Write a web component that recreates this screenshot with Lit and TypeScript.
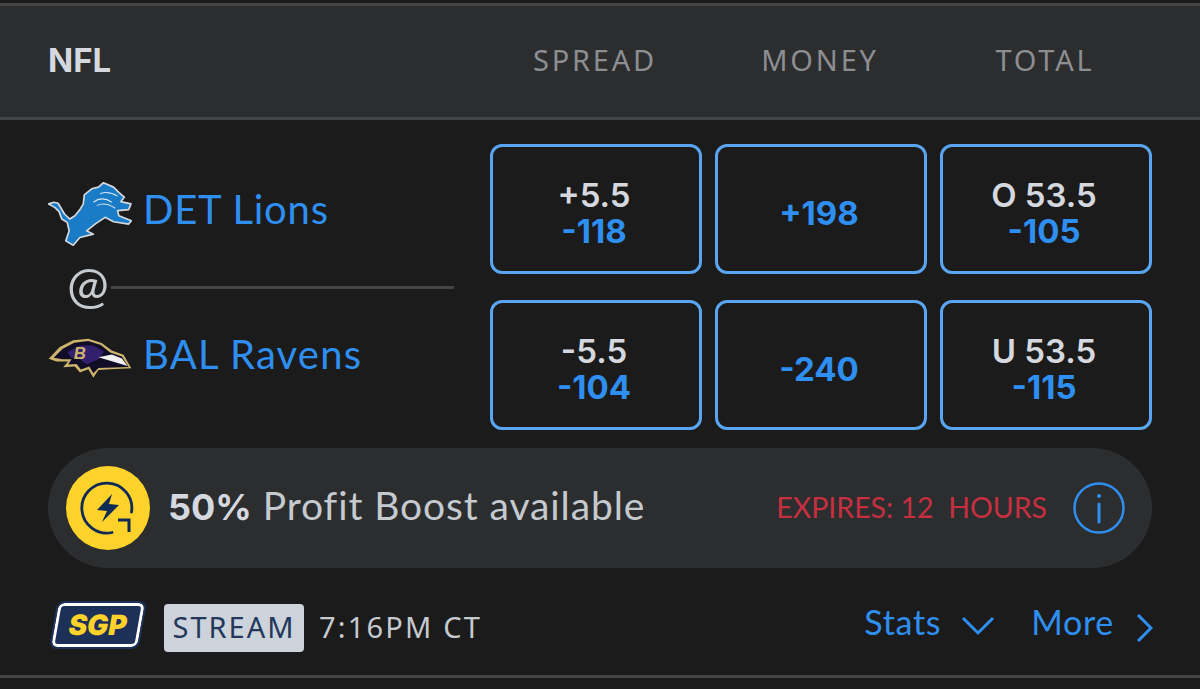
import { LitElement, html, css } from "lit";
import { customElement } from "lit/decorators.js";

const lion = html`<svg class="logo" width="84" height="64" viewBox="55 40 250 190">
  <path d="M57 105 L72 100 L85 103 L94 118 L104 135 L120 150 L135 140 L150 122 L160 105 L163 78 L185 60 L205 55 L220 42 L250 55 L265 70 L282 85 L272 98 L302 105 L295 122 L262 125 L266 140 L303 155 L295 165 L250 158 L225 145 L195 165 L170 185 L190 195 L150 205 L130 228 L108 215 L118 185 L112 160 L96 150 L88 128 L76 116 Z" fill="#1a7cc6" stroke="#d5d8dc" stroke-width="5" stroke-linejoin="round"/>
  <path d="M190 100 Q215 80 245 100 M200 110 Q225 98 255 118 M210 75 Q235 65 262 82" fill="none" stroke="#d5e6f4" stroke-width="3"/>
</svg>`;

const raven = html`<svg class="logo" width="84" height="41" viewBox="55 235 250 122">
  <path d="M57 297 L90 262 L130 242 L175 237 L215 250 L245 272 L280 285 L303 325 L240 328 L205 330 L190 353 L175 328 L150 338 L135 320 L100 322 L115 305 L80 305 Z" fill="#cdb46c" />
  <path d="M72 294 L98 268 L133 249 L175 244 L212 256 L240 278 L275 290 L295 321 L205 324 L190 340 L178 320 L153 329 L140 312 L115 314 L125 298 L98 298 Z" fill="#120d26"/>
  <path d="M112 277 L150 257 L190 257 L222 275 L205 298 L170 313 L150 298 L124 294 Z" fill="#32206c"/>
  <path d="M205 292 L245 284 L275 296 L292 318 L245 304 Z" fill="#f1f1f1"/>
  <text x="132" y="297" font-family="Liberation Sans, sans-serif" font-style="italic" font-weight="700" font-size="50" fill="#cdb46c">B</text>
</svg>`;

const boost = html`<svg width="84" height="84" viewBox="0 0 84 84">
  <circle cx="42" cy="42" r="42" fill="#fdd32b"/>
  <path d="M65.5 46 A25 25 0 1 0 46 66.500" fill="none" stroke="#0e2a55" stroke-width="2.800" stroke-linecap="round"/>
  <path d="M52 54 H63 V66" fill="none" stroke="#0e2a55" stroke-width="3"/>
  <path d="M46 28 L31 44 L41 45 L36 56 L53 39 L43 38 Z" fill="#0e2a55"/>
</svg>`;

@customElement("app-root")
export class AppRoot extends LitElement {
  static styles = css`
    :host {
      display: block;
      width: 1200px;
      height: 689px;
      background: #1b1b1c;
      font-family: "Lato", "Liberation Sans", sans-serif;
      overflow: hidden;
      box-sizing: border-box;
      padding-top: 3px;
    }
    .head {
      height: 117px;
      box-sizing: border-box;
      background: #2c2d2f;
      border-top: 3px solid #434445;
      border-bottom: 3px solid #434445;
      display: grid;
      grid-template-columns: 429px repeat(3, 212px);
      column-gap: 13px;
      padding-left: 48px;
      padding-bottom: 4px;
      align-items: center;
    }
    .head .lg {
      font-family: "Inter", sans-serif;
      font-weight: 700;
      font-size: 33px;
      color: #d5d9df;
    }
    .head .col {
      text-align: center;
      font-family: "Noto Sans", sans-serif;
      font-size: 29px;
      letter-spacing: 2.800px;
      color: #8c8e91;
      transform: translateX(-1px);
    }
    .body {
      display: grid;
      grid-template-columns: 442px 1fr;
      padding: 24px 48px 0;
      height: 310px;
      box-sizing: border-box;
    }
    .teams {
      display: flex;
      flex-direction: column;
      padding-right: 36px;
    }
    .team {
      display: flex;
      align-items: center;
      gap: 11px;
      color: #2f8ff0;
      font-size: 40px;
      letter-spacing: 0.800px;
    }
    .team span { margin-bottom: 10px; }
    .team.a { height: 68px; margin-top: 36px; }
    .team.b { height: 54px; }
    .team.b span { letter-spacing: 1.200px; margin-bottom: 8px; }
    .at {
      display: flex;
      align-items: center;
      height: 48px;
      margin-top: 15px;
      margin-bottom: 20px;
      padding-left: 19px;
      font-size: 50px;
      color: #c5cacf;
      gap: 2px;
    }
    .at i { flex: 1; height: 3px; background: #444547; }
    .at span { margin-bottom: 6px; }
    .grid {
      display: grid;
      grid-template-columns: repeat(3, 212px);
      grid-template-rows: repeat(2, 130px);
      column-gap: 13px;
      row-gap: 26px;
    }
    .bet {
      box-sizing: border-box;
      border: 3px solid #5aa5f0;
      border-radius: 12px;
      display: flex;
      flex-direction: column;
      align-items: center;
      justify-content: center;
      font-family: "Inter", sans-serif;
      font-weight: 700;
      font-size: 33px;
      line-height: 36px;
      padding: 8px 4px 0 0;
    }
    .bet .l { color: #d5d9df; font-weight: 600; }
    .bet .o { color: #2f8ff0; }
    .promo {
      margin: 18px 48px 0;
      height: 120px;
      border-radius: 60px;
      background: #2c2d2f;
      display: flex;
      align-items: center;
      padding: 0 27px 0 18px;
    }
    .promo svg { display: block; flex: none; }
    .promo .txt {
      margin-left: 18px;
      margin-bottom: 6px;
      font-size: 39px;
      letter-spacing: 0.900px;
      color: #c5cacf;
    }
    .promo .txt b { font-family: "Inter", sans-serif; font-weight: 700; font-size: 36px; letter-spacing: 0; color: #d5d9df; }
    .promo .exp {
      margin-left: auto;
      margin-bottom: 2px;
      font-size: 28.500px;
      color: #c62f40;
      white-space: pre;
    }
    .promo .info { margin-left: 26px; }
    .foot {
      display: flex;
      align-items: center;
      margin-top: 34px;
      padding: 0 47px 0 50px;
      height: 52px;
    }
    .sgp {
      width: 86px;
      height: 44px;
      margin-left: 5px;
      margin-bottom: 6px;
      box-sizing: border-box;
      transform: skewX(-10deg);
      border: 3px solid #fff;
      border-radius: 6px;
      outline: 2px solid #1d3057;
      background: #1d3057;
      display: flex;
      align-items: center;
      justify-content: center;
    }
    .sgp span {
      font-family: "Inter", sans-serif;
      font-weight: 900;
      font-size: 28px;
      color: #fdd32b;
    }
    .stream {
      margin-left: 23px;
      width: 140px;
      height: 48px;
      box-sizing: border-box;
      padding-bottom: 4px;
      border-radius: 4px;
      background: #cdd3da;
      color: #23385a;
      font-family: "Noto Sans", sans-serif;
      font-size: 29px;
      letter-spacing: 2px;
      display: flex;
      align-items: center;
      justify-content: center;
    }
    .time {
      margin-left: 15px;
      margin-bottom: 4px;
      font-family: "Noto Sans", sans-serif;
      font-size: 29px;
      letter-spacing: 2.200px;
      color: #c5cacf;
    }
    .lnk {
      color: #2f8ff0;
      font-size: 34px;
      letter-spacing: 0.700px;
      margin-bottom: 14px;
    }
    .stats { margin-left: auto; }
    .foot svg { flex: none; margin-left: 20px; margin-bottom: 4px; }
    .foot svg.chev { margin-left: 22px; margin-bottom: 0; }
    .more { margin-left: 36px; }
    .end {
      margin-top: 21px;
      height: 3px;
      background: #434445;
    }
  `;

  bet(l: string, o: string) {
    return html`<div class="bet">${l ? html`<span class="l">${l}</span>` : ""}<span class="o">${o}</span></div>`;
  }

  render() {
    return html`
      <div class="head">
        <span class="lg">NFL</span>
        <span class="col">SPREAD</span>
        <span class="col">MONEY</span>
        <span class="col">TOTAL</span>
      </div>
      <div class="body">
        <div class="teams">
          <div class="team a">${lion}<span>DET Lions</span></div>
          <div class="at"><span>@</span><i></i></div>
          <div class="team b">${raven}<span>BAL Ravens</span></div>
        </div>
        <div class="grid">
          ${this.bet("+5.5", "-118")}${this.bet("", "+198")}${this.bet("O 53.5", "-105")}
          ${this.bet("-5.5", "-104")}${this.bet("", "-240")}${this.bet("U 53.5", "-115")}
        </div>
      </div>
      <div class="promo">
        ${boost}
        <div class="txt"><b>50%</b> Profit Boost available</div>
        <div class="exp">EXPIRES: 12  HOURS</div>
        <svg class="info" width="52" height="52" viewBox="0 0 52 52">
          <circle cx="26" cy="26" r="24.500" fill="none" stroke="#2f8ff0" stroke-width="2.500"/>
          <path d="M26 22 V40" stroke="#2f8ff0" stroke-width="3" stroke-linecap="round"/>
          <circle cx="26" cy="14" r="2" fill="#2f8ff0"/>
        </svg>
      </div>
      <div class="foot">
        <div class="sgp"><span>SGP</span></div>
        <div class="stream">STREAM</div>
        <div class="time">7:16PM CT</div>
        <span class="lnk stats">Stats</span>
        <svg width="34" height="20" viewBox="0 0 34 20"><path d="M2 2 L17 17 L32 2" fill="none" stroke="#2f8ff0" stroke-width="3"/></svg>
        <span class="lnk more">More</span>
        <svg class="chev" width="17" height="28" viewBox="0 0 17 28"><path d="M2 1 L15 14 L2 27" fill="none" stroke="#2f8ff0" stroke-width="3"/></svg>
      </div>
      <div class="end"></div>
    `;
  }
}
